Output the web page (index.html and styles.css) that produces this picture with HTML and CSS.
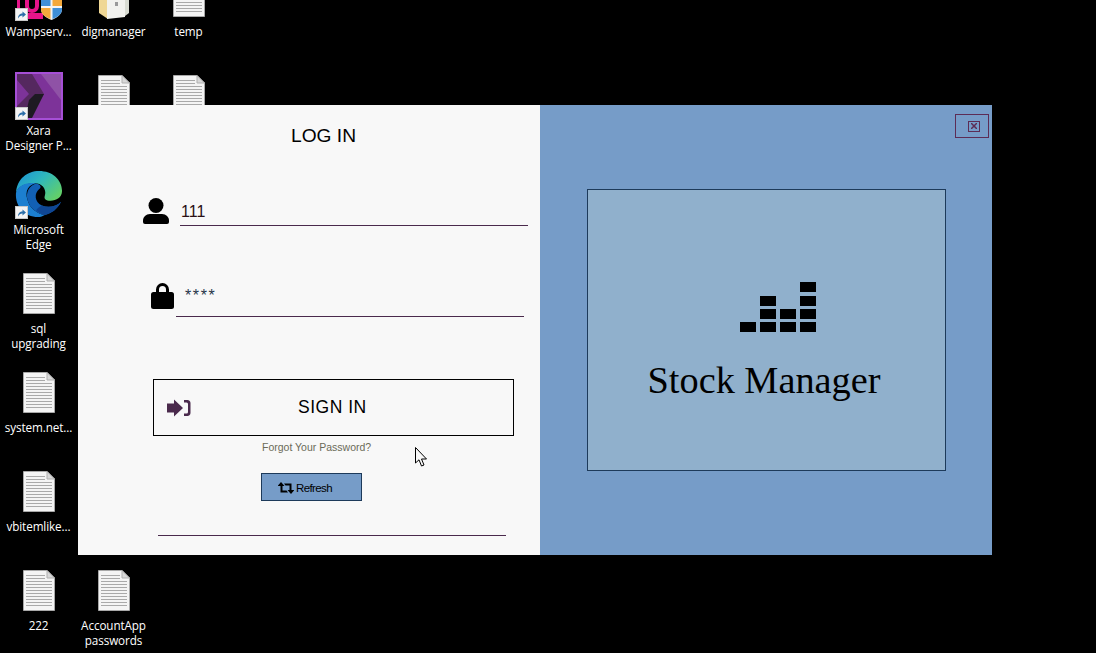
FILE: index.html
```html
<!DOCTYPE html>
<html lang="en">
<head>
<meta charset="utf-8">
<title>Stock Manager</title>
<link rel="stylesheet" href="styles.css">
</head>
<body>
<svg class="defs" width="0" height="0" aria-hidden="true">
  <symbol id="doc" viewBox="0 0 32 41">
    <path d="M.5.5H24L31.5 8V40.5H.5Z" fill="#f4f4f4" stroke="#a8a8a8"/>
    <path d="M24 .5V8H31.5Z" fill="#d8d8d8" stroke="#b0b0b0"/>
    <path d="M3 5.500H22M3 8.500H22M3 11.500H29M3 14.500H29M3 17.500H29M3 20.500H29M3 23.500H29M3 26.500H29M3 29.500H29M3 32.500H29M3 35.500H29" stroke="#a9a9a9" stroke-width="1"/>
  </symbol>
  <symbol id="shortcut" viewBox="0 0 13 13">
    <rect x=".5" y=".5" width="12" height="12" fill="#f4f4f4" stroke="#c8c8c8"/>
    <path d="M3 10.500C3 7 5 5.500 7.500 5.500V3.500L11 6.500 7.500 9.500V7.500C5.500 7.500 4 8.500 3 10.500Z" fill="#2b6ea8"/>
  </symbol>
</svg>

<main class="desktop">
  <div class="item">
    <div class="glyph">
      <svg class="wamp" width="48" height="48" viewBox="0 0 48 48">
        <path d="M2 27H5V40H28V46H5A3 3 0 0 1 2 43Z" fill="#e6148a"/>
        <path d="M12 27V33A5 5 0 0 0 22 33V27" fill="none" stroke="#e6148a" stroke-width="4"/>
        <path d="M26 27V36C26 42 32 45 36.500 47 41 45 47 42 47 36V27Z" fill="#f4f4f4"/>
        <path d="M26 27H35.500V33H26Z" fill="#3f8fd8"/>
        <path d="M37.500 27H47V33H37.500Z" fill="#f3a83c"/>
        <path d="M26 35H35.500V46C30 44 26 41 26 36Z" fill="#f3a83c"/>
        <path d="M37.500 35H47V36C47 41 43 44 37.500 46Z" fill="#3f8fd8"/>
      </svg>
      <svg class="badge"><use href="#shortcut"/></svg>
    </div>
    <span class="label">Wampserv...</span>
  </div>
  <div class="item">
    <div class="glyph">
      <svg class="folder" width="32" height="44" viewBox="0 0 32 44">
        <path d="M1 4H10V44L1 38Z" fill="#efd795"/>
        <path d="M9 0H27V42L9 44Z" fill="#f2f2ee"/>
        <path d="M27 2H31V38L27 41Z" fill="#d9dcd2"/>
        <path d="M17 27H20V31H17Z" fill="#9a9a9a"/>
      </svg>
    </div>
    <span class="label">digmanager</span>
  </div>
  <div class="item">
    <div class="glyph"><svg class="doc"><use href="#doc"/></svg></div>
    <span class="label">temp</span>
  </div>

  <div class="item">
    <div class="glyph">
      <svg class="xara" width="48" height="48" viewBox="0 0 48 48">
        <rect width="48" height="48" fill="#a64fd6"/>
        <rect x="2" y="2" width="44" height="44" fill="#7d3399"/>
        <path d="M26 2H46V28Z" fill="#8f52a6"/>
        <path d="M2 2H17L29 22 13 46H2V34L14 22 2 8Z" fill="#55285f"/>
        <path d="M14 28 20 22 29 22 17 46H10Z" fill="#1e1a22"/>
      </svg>
      <svg class="badge"><use href="#shortcut"/></svg>
    </div>
    <span class="label">Xara<br>Designer P...</span>
  </div>
  <div class="item">
    <div class="glyph"><svg class="doc"><use href="#doc"/></svg></div>
  </div>
  <div class="item">
    <div class="glyph"><svg class="doc"><use href="#doc"/></svg></div>
  </div>

  <div class="item first">
    <div class="glyph">
      <svg class="edge" width="50" height="50" viewBox="0 0 50 50">
        <defs>
          <linearGradient id="edgeTop" x1="0" y1="0" x2="1" y2=".7">
            <stop offset="0" stop-color="#1b8fd8"/>
            <stop offset=".5" stop-color="#2fb8bc"/>
            <stop offset="1" stop-color="#62cf6a"/>
          </linearGradient>
        </defs>
        <path d="M1 24C2 9 13 1 25 1 39 1 49 10 49 22 49 29 43 32 37 32 32 32 30 30 31 27 33 22 30 15 23 14 12 13 3 17 1 24Z" fill="url(#edgeTop)"/>
        <path d="M1 24C3 16 12 12 22 14 14 15 10 22 13 31 15 40 24 46 31 47 28 49 26 49 24 49 10 49 0 38 1 24Z" fill="#1c7fd0"/>
        <path d="M22 14C27 15 28 18 25 20 20 24 20 33 28 37 35 40 43 38 48 33 44 41 38 45 31 47 24 46 15 40 13 31 11 23 15 16 22 14Z" fill="#1260b4"/>
        <path d="M28 37C35 40 43 38 48 33 44 41 38 45 31 47 27 46 24 44 22 42 24 39 26 38 28 37Z" fill="#0f4694"/>
      </svg>
      <svg class="badge"><use href="#shortcut"/></svg>
    </div>
    <span class="label">Microsoft<br>Edge</span>
  </div>
  <div class="item first">
    <div class="glyph"><svg class="doc"><use href="#doc"/></svg></div>
    <span class="label">sql<br>upgrading</span>
  </div>
  <div class="item first">
    <div class="glyph"><svg class="doc"><use href="#doc"/></svg></div>
    <span class="label">system.net...</span>
  </div>
  <div class="item first">
    <div class="glyph"><svg class="doc"><use href="#doc"/></svg></div>
    <span class="label">vbitemlike...</span>
  </div>
  <div class="item first">
    <div class="glyph"><svg class="doc"><use href="#doc"/></svg></div>
    <span class="label">222</span>
  </div>
  <div class="item">
    <div class="glyph"><svg class="doc"><use href="#doc"/></svg></div>
    <span class="label">AccountApp<br>passwords</span>
  </div>
</main>

<section class="window">
  <div class="login">
    <h1 class="title">LOG IN</h1>
    <div class="field field-user">
      <svg class="icon-user" width="26" height="26" viewBox="0 0 26 26">
        <circle cx="13" cy="7.500" r="7.500"/>
        <path d="M7 16H19C23 16 26 19 26 22.500V24A2 2 0 0 1 24 26H2A2 2 0 0 1 0 24V22.500C0 19 3 16 7 16Z"/>
      </svg>
      <div class="value value-user">111</div>
    </div>
    <div class="field field-pass">
      <svg class="icon-lock" width="23" height="26" viewBox="0 0 23 26">
        <path d="M5 10V6.500A6.500 6.500 0 0 1 18 6.500V10H15V6.500A3.500 3.500 0 0 0 8 6.500V10Z"/>
        <rect y="9" width="23" height="17" rx="2.500"/>
      </svg>
      <div class="value value-pass">****</div>
    </div>
    <button class="signin">
      <svg class="icon-signin" width="24" height="18" viewBox="0 0 24 18">
        <path d="M0 4.500H7V.500L16 9 7 17.500V13.500H0Z"/>
        <path d="M17 1H20A3 3 0 0 1 23.500 4V14A3 3 0 0 1 20 17H17V14.500H19.500A1.500 1.500 0 0 0 21 13V5A1.500 1.500 0 0 0 19.500 3.500H17Z"/>
      </svg>
      <span>SIGN IN</span>
    </button>
    <a class="forgot">Forgot Your Password?</a>
    <button class="refresh">
      <svg width="16" height="12" viewBox="0 0 16 12">
        <path d="M3 0 6.500 4H4.500V8.500H8.500L10 10.500H2.500V4H-.5Z"/>
        <path d="M13 12 9.500 8H11.500V3.500H7.500L6 1.500H13.500V8H16.500Z"/>
      </svg>
      <span>Refresh</span>
    </button>
    <div class="rule"></div>
  </div>
  <div class="brand">
    <button class="close" aria-label="Close">
      <span class="close-box">
        <svg width="6" height="6" viewBox="0 0 6 6"><path d="M0 0 6 6M6 0 0 6"/></svg>
      </span>
    </button>
    <div class="card">
      <svg class="logo" width="76" height="50" viewBox="0 0 76 50">
        <path d="M0 40H16V50H0ZM20 40H36V50H20ZM40 40H56V50H40ZM60 40H76V50H60ZM20 27H36V37H20ZM40 27H56V37H40ZM60 27H76V37H60ZM20 14H36V24H20ZM60 14H76V24H60ZM60 0H76V10H60Z"/>
      </svg>
      <div class="brand-name">Stock Manager</div>
    </div>
  </div>
</section>

<svg class="cursor" width="13" height="20" viewBox="0 0 13 20">
  <path d="M.5.5V16L4 12.800 6.500 19 9 18 6.500 12H11.500Z" fill="#f8f8f8" stroke="#000"/>
</svg>
</body>
</html>
```

FILE: styles.css
```css
* { box-sizing: border-box; }

html, body {
  margin: 0;
  height: 100%;
  overflow: hidden;
  background: #000;
}

.defs { position: absolute; }

/* desktop icon grid: 75px columns, 99px rows, first row scrolled off the top */
.desktop {
  display: grid;
  grid-template-columns: repeat(3, 75px);
  grid-auto-rows: 99px;
  margin: -27px 0 0 1px;
  font-family: "Open Sans", "Noto Sans", sans-serif;
}

.item {
  display: flex;
  flex-direction: column;
  align-items: center;
}

.first { grid-column: 1; }

.glyph {
  position: relative;
  flex: none;
  width: 48px;
  height: 48px;
  display: flex;
  align-items: flex-end;
  justify-content: center;
}

.glyph .doc {
  width: 32px;
  height: 41px;
  margin-bottom: 4px;
}

.glyph .folder { margin-bottom: 2px; }

.badge {
  position: absolute;
  left: 0;
  bottom: 0;
  width: 13px;
  height: 13px;
}

.label {
  margin-top: 3px;
  width: 75px;
  text-align: center;
  font-size: 11.700px;
  letter-spacing: -.1px;
  line-height: 15px;
  color: #fff;
  white-space: nowrap;
}

/* app window */
.window {
  position: absolute;
  left: 78px;
  top: 105px;
  width: 914px;
  height: 450px;
  display: grid;
  grid-template-columns: 462px 452px;
}

.login {
  display: flex;
  flex-direction: column;
  align-items: flex-start;
  background: #f8f8f8;
  font-family: "Liberation Sans", Arial, sans-serif;
}

.title {
  margin: 20px 0 0 213px;
  font-size: 19.200px;
  font-weight: 400;
  line-height: 22px;
  color: #000;
}

.field {
  display: flex;
  align-items: flex-end;
}

.field-user {
  margin: 51px 0 0 65px;
  gap: 11px;
}

.field-pass {
  margin: 57px 0 0 73px;
  gap: 2px;
}

.value {
  color: #2a0f14;
  border-bottom: 1px solid #4a2a4c;
}

.value-user {
  width: 348px;
  height: 28px;
  padding-left: 1px;
  font-size: 16px;
  line-height: 28px;
}

.value-pass {
  width: 348px;
  height: 33px;
  padding-left: 9px;
  font-size: 16px;
  letter-spacing: 1.600px;
  line-height: 24px;
  color: #26364a;
}

.icon-user, .icon-lock { fill: #000; flex: none; }
.icon-user { margin-bottom: 2px; }
.icon-lock { margin-bottom: 8px; }

.signin {
  display: flex;
  align-items: center;
  width: 361px;
  height: 57px;
  margin: 62px 0 0 75px;
  padding: 0 0 0 13px;
  background: transparent;
  border: 1px solid #000;
  font: 400 17.500px "Liberation Sans", Arial, sans-serif;
  color: #000;
}

.signin span {
  margin-left: 107px;
  letter-spacing: .5px;
}

.icon-signin { fill: #4a2a4c; flex: none; }

.forgot {
  margin: 4px 0 0 184px;
  font-size: 10.500px;
  line-height: 14px;
  color: #6b6b58;
}

.refresh {
  display: flex;
  align-items: center;
  gap: 2px;
  width: 101px;
  height: 28px;
  margin: 19px 0 0 183px;
  padding: 1px 0 0 16px;
  background: #769cc8;
  border: 1px solid #1d3a5a;
  font: 400 11.500px "Liberation Sans", Arial, sans-serif;
  letter-spacing: -.6px;
  color: #000;
}

.refresh svg { fill: #000; flex: none; }

.rule {
  width: 348px;
  height: 1px;
  margin: 34px 0 0 80px;
  background: #4a2a4c;
}

.brand {
  position: relative;
  background: #769cc8;
  padding: 84px 0 0 47px;
}

.close {
  position: absolute;
  top: 9px;
  right: 3px;
  width: 34px;
  height: 24px;
  display: flex;
  align-items: center;
  justify-content: center;
  padding: 0 0 0 3px;
  background: transparent;
  border: 1px solid #5c2c55;
}

.close-box {
  display: flex;
  align-items: center;
  justify-content: center;
  width: 12px;
  height: 11px;
  border: 1px solid #5c2c55;
}

.close-box svg {
  stroke: #5c2c55;
  stroke-width: 1.500;
  fill: none;
}

.card {
  width: 359px;
  height: 282px;
  display: flex;
  flex-direction: column;
  align-items: center;
  background: #90b0cc;
  border: 1px solid #1d3a5a;
}

.logo {
  fill: #000;
  margin: 92px 0 0 23px;
}

.brand-name {
  margin: 26px 0 0 -5px;
  font-family: "Liberation Serif", "Times New Roman", serif;
  font-size: 38.300px;
  line-height: 44px;
  color: #000;
  white-space: nowrap;
}

.cursor {
  position: absolute;
  left: 415px;
  top: 447px;
}
```
